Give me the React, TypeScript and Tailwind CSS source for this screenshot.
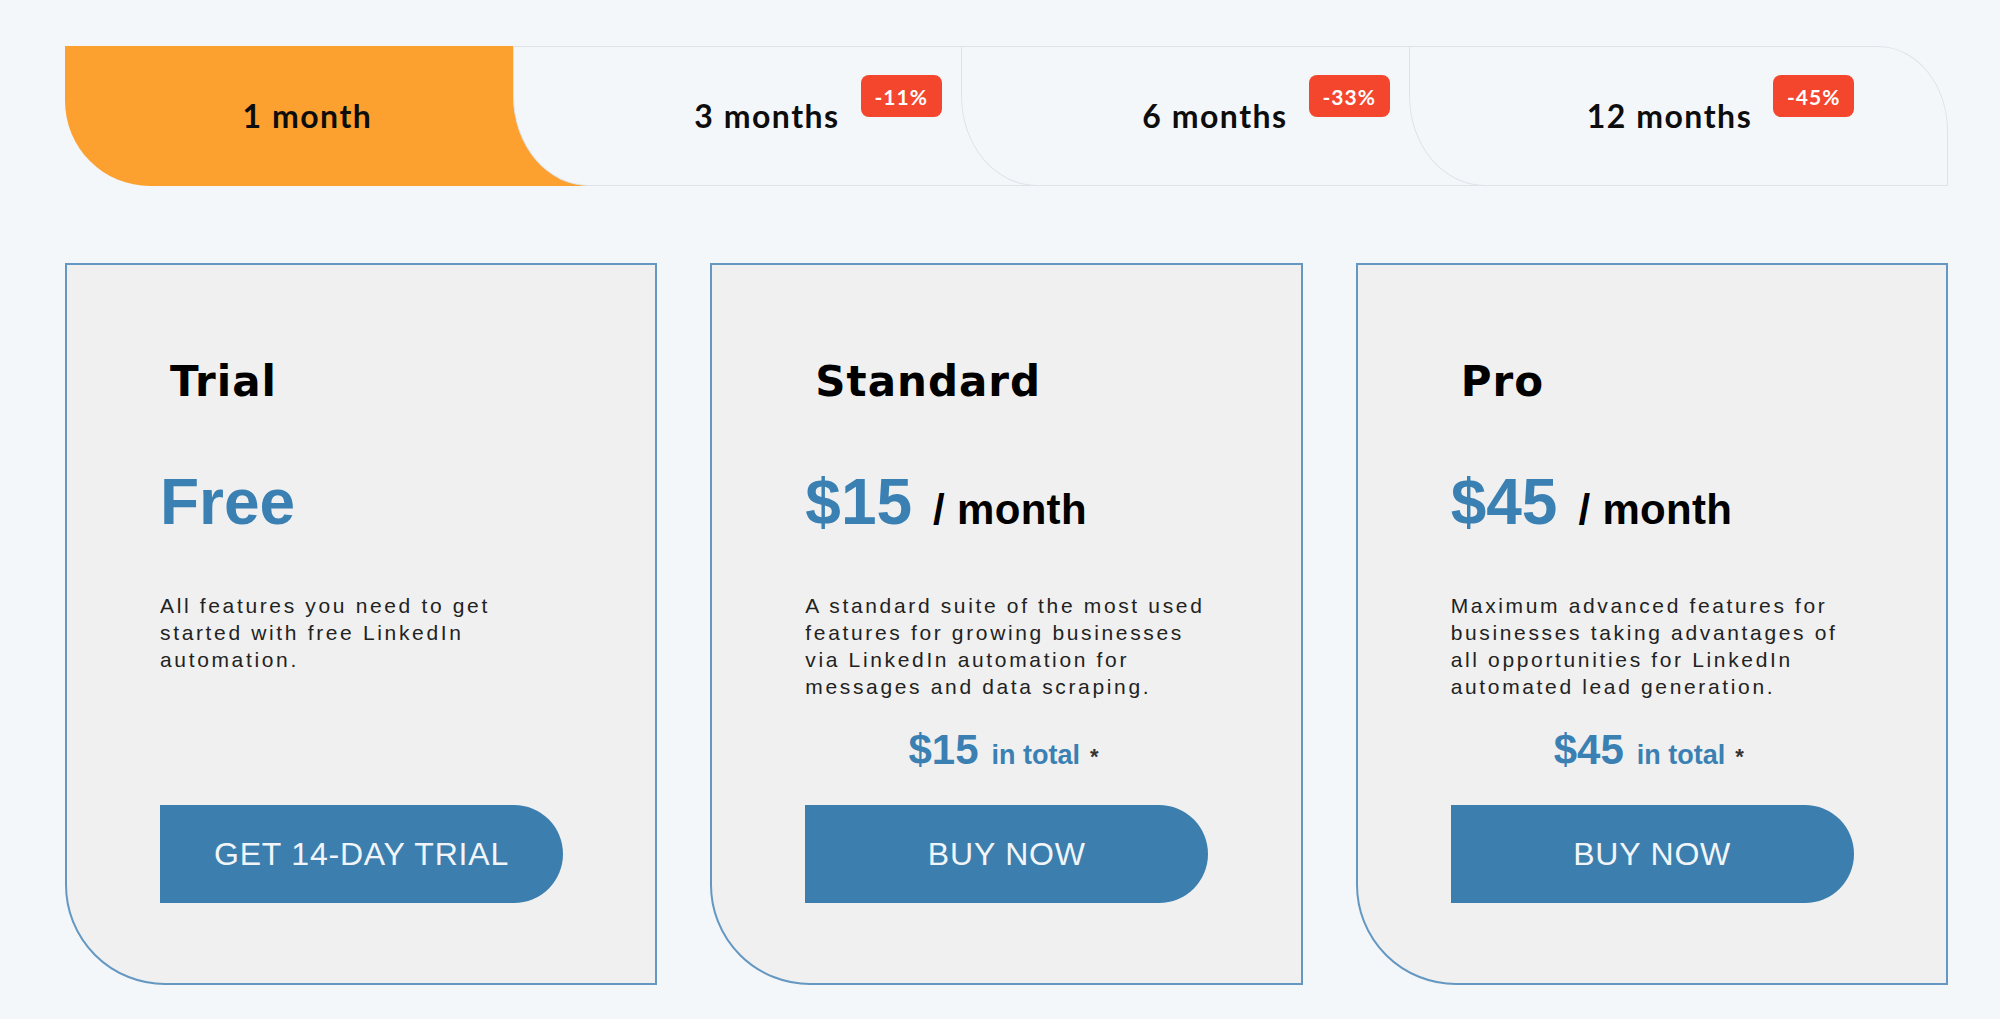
const tabFont = "font-['Lato',sans-serif]"

const Badge = ({ label }: { label: string }) => (
  <span className="absolute -top-[25px] left-[calc(100%+21px)] flex h-[42px] w-[81px] items-center justify-center rounded-[8px] bg-[#f4452d] text-[21px] font-bold tracking-[1px] text-white">
    {label}
  </span>
)

const TabLabel = ({ text, badge }: { text: string; badge?: string }) => (
  <span className={`relative ${tabFont} text-[32px] font-bold leading-none tracking-[1.5px] text-[#0d0d0d]`}>
    {text}
    {badge && <Badge label={badge} />}
  </span>
)

const PeriodTabs = () => (
  <div className="flex h-[140px]">
    <div className="flex h-full w-[525px] shrink-0 items-center justify-center rounded-bl-[85px] bg-[#fca12f] pr-[40px]">
      <TabLabel text="1 month" />
    </div>
    <div className="-ml-[77px] flex h-full w-[525px] shrink-0 items-center justify-center rounded-bl-[76px_90px] border border-r-0 border-[#dfe3e8] bg-[#f4f7fa] pr-[18px]">
      <TabLabel text="3 months" badge="-11%" />
    </div>
    <div className="-ml-[77px] flex h-full w-[525px] shrink-0 items-center justify-center rounded-bl-[76px_90px] border border-r-0 border-[#dfe3e8] bg-[#f4f7fa] pr-[18px]">
      <TabLabel text="6 months" badge="-33%" />
    </div>
    <div className="-ml-[77px] flex h-full flex-1 items-center justify-center rounded-bl-[76px_90px] rounded-tr-[70px_85px] border border-[#dfe3e8] bg-[#f4f7fa] pr-[18px]">
      <TabLabel text="12 months" badge="-45%" />
    </div>
  </div>
)

type Plan = {
  name: string
  price: string
  perMonth: boolean
  lines: string[]
  total?: string
  cta: string
}

const plans: Plan[] = [
  {
    name: 'Trial',
    price: 'Free',
    perMonth: false,
    lines: ['All features you need to get', 'started with free LinkedIn', 'automation.'],
    cta: 'GET 14-DAY TRIAL',
  },
  {
    name: 'Standard',
    price: '$15',
    perMonth: true,
    lines: [
      'A standard suite of the most used',
      'features for growing businesses',
      'via LinkedIn automation for',
      'messages and data scraping.',
    ],
    total: '$15',
    cta: 'BUY NOW',
  },
  {
    name: 'Pro',
    price: '$45',
    perMonth: true,
    lines: [
      'Maximum advanced features for',
      'businesses taking advantages of',
      'all opportunities for LinkedIn',
      'automated lead generation.',
    ],
    total: '$45',
    cta: 'BUY NOW',
  },
]

const PlanCard = ({ plan }: { plan: Plan }) => (
  <div className="flex h-[722px] flex-col rounded-bl-[100px] border-2 border-[#6498c2] bg-[#f0f0f0] pb-[80px] pt-[96px]">
    <h2 className="ml-[103px] font-['DejaVu_Sans',sans-serif] text-[42px] font-bold leading-none tracking-[1px] text-black">
      {plan.name}
    </h2>

    <div className="ml-[93px] mt-[67px] flex items-baseline font-['Liberation_Sans',sans-serif] font-bold leading-none">
      <span className="text-[64px] text-[#3a80b3]">{plan.price}</span>
      {plan.perMonth && <span className="ml-[21px] text-[42px] tracking-[0.3px] text-black">/ month</span>}
    </div>

    <p className="ml-[93px] mt-[58px] font-['Liberation_Sans',sans-serif] text-[21px] leading-[27px] tracking-[2.65px] text-[#222]">
      {plan.lines.map((line, i) => (
        <span key={i} className="block">
          {line}
        </span>
      ))}
    </p>

    {plan.total && (
      <div className="mt-[29px] flex items-baseline justify-center pr-[6px] font-['Liberation_Sans',sans-serif] font-bold leading-none">
        <span className="text-[42px] text-[#3a80b3]">{plan.total}</span>
        <span className="ml-[13px] text-[27px] text-[#3a80b3]">in total</span>
        <span className="ml-[10px] text-[22px] text-[#333]">*</span>
      </div>
    )}

    <button className="ml-[93px] mt-auto flex h-[98px] w-[403px] items-center justify-center rounded-r-full bg-[#3c7fae] font-['Liberation_Sans',sans-serif] text-[32px] tracking-[0.8px] text-[#f1f5f9]">
      {plan.cta}
    </button>
  </div>
)

export default function App() {
  return (
    <div className="min-h-screen w-full bg-[#f4f7fa] pl-[65px] pr-[52px] pt-[46px]">
      <PeriodTabs />
      <div className="mt-[77px] grid grid-cols-3 gap-[53px]">
        {plans.map((plan) => (
          <PlanCard key={plan.name} plan={plan} />
        ))}
      </div>
    </div>
  )
}
